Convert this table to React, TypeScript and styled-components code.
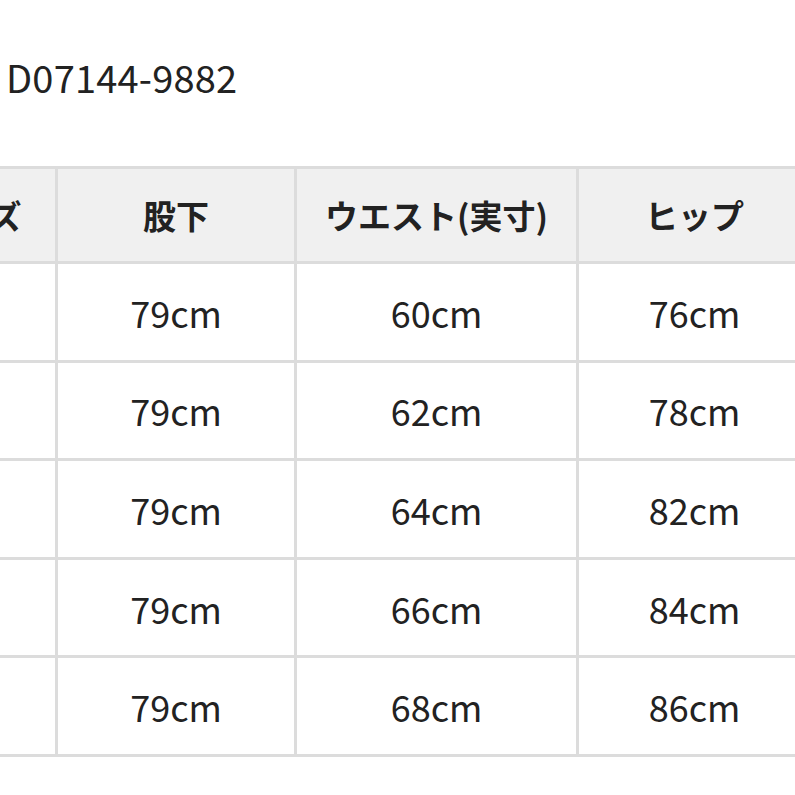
import React from "react"
import styled, { createGlobalStyle } from "styled-components"

const GlobalStyle = createGlobalStyle`
	html, body {
		margin: 0;
		padding: 0;
		background: #ffffff;
	}
	body {
		font-family: "Noto Sans CJK JP", "Noto Sans", sans-serif;
		color: #222222;
		overflow: hidden;
	}
`

const Page = styled.div`
	width: 795px;
	height: 795px;
	overflow: hidden;
	background: #ffffff;
`

const ProductCode = styled.div`
	padding: 50px 0 0 6px;
	height: 166px;
	box-sizing: border-box;
	font-size: 38px;
	line-height: 54px;
	color: #222222;
	letter-spacing: 0.2px;
`

const SizeTable = styled.table`
	border-collapse: collapse;
	margin-left: -113px;
	table-layout: fixed;
	width: 923px;
`

const HeadCell = styled.th<{ $width: number }>`
	width: ${(p) => p.$width}px;
	height: 95px;
	padding: 0;
	background: #f0f0f0;
	border: 3px solid #dcdcdc;
	font-size: 33px;
	font-weight: 700;
	text-align: center;
	vertical-align: middle;
	color: #222222;
	box-sizing: border-box;
`

const Cell = styled.td`
	height: 98.6px;
	padding: 0;
	border: 3px solid #dcdcdc;
	font-size: 36px;
	font-weight: 400;
	text-align: center;
	vertical-align: middle;
	color: #222222;
	box-sizing: border-box;
`

const columns = [
	{ label: "サイズ", width: 168 },
	{ label: "股下", width: 239 },
	{ label: "ウエスト(実寸)", width: 282 },
	{ label: "ヒップ", width: 234 },
]

const rows = [
	["S", "79cm", "60cm", "76cm"],
	["M", "79cm", "62cm", "78cm"],
	["L", "79cm", "64cm", "82cm"],
	["LL", "79cm", "66cm", "84cm"],
	["3L", "79cm", "68cm", "86cm"],
]

export default function App() {
	return (
		<Page>
			<GlobalStyle />
			<ProductCode>D07144-9882</ProductCode>
			<SizeTable>
				<thead>
					<tr>
						{columns.map((c) => (
							<HeadCell key={c.label} $width={c.width}>
								{c.label}
							</HeadCell>
						))}
					</tr>
				</thead>
				<tbody>
					{rows.map((r) => (
						<tr key={r[0]}>
							{r.map((v, i) => (
								<Cell key={i}>{v}</Cell>
							))}
						</tr>
					))}
				</tbody>
			</SizeTable>
		</Page>
	)
}
